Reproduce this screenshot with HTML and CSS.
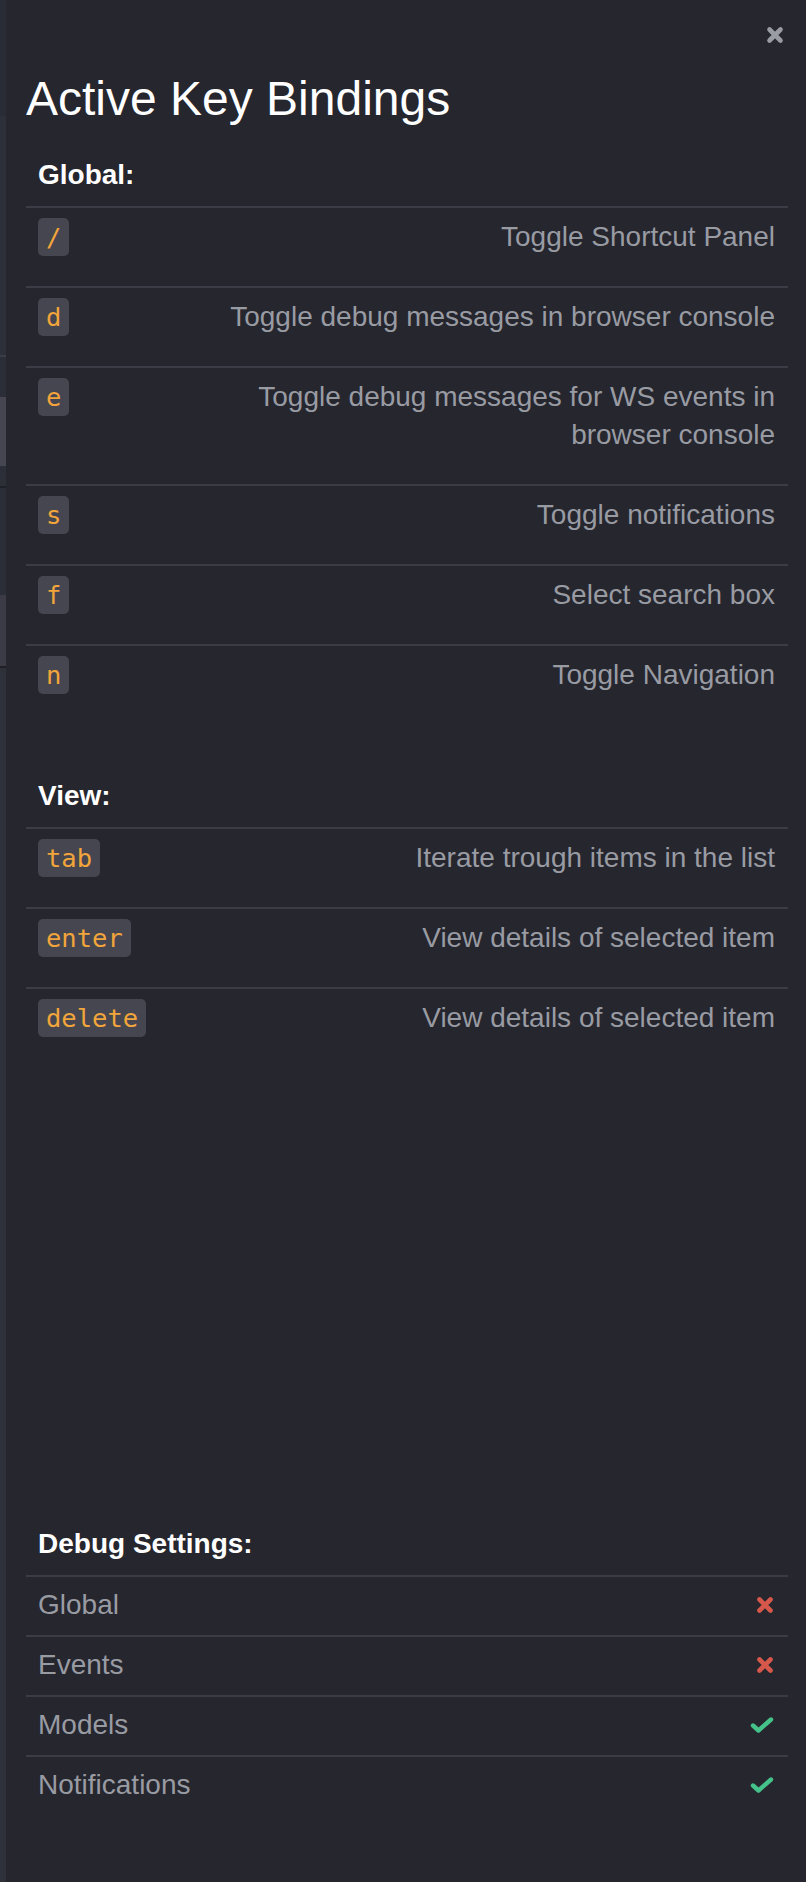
FILE: index.html
```html
<!DOCTYPE html>
<html lang="en">
<head>
<meta charset="utf-8">
<title>Active Key Bindings</title>
<link rel="stylesheet" href="styles.css">
</head>
<body>
<div class="page">
  <aside class="edge" aria-hidden="true">
    <div class="seg seg-a"></div>
    <div class="seg seg-b"></div>
    <div class="seg seg-line-light"></div>
    <div class="seg seg-c"></div>
    <div class="seg seg-d"></div>
    <div class="seg seg-e"></div>
    <div class="seg seg-line-dark"></div>
    <div class="seg seg-f"></div>
    <div class="seg seg-g"></div>
    <div class="seg seg-line-dark"></div>
    <div class="seg seg-rest"></div>
  </aside>

  <section class="panel">
    <div class="toolbar">
      <button class="close" type="button" aria-label="Close">
        <svg viewBox="0 0 18 18"><path d="M3.5 3.5L14.5 14.5M14.5 3.5L3.5 14.5"/></svg>
      </button>
    </div>

    <h1 class="title">Active Key Bindings</h1>

    <div class="group group-global">
      <h2 class="group-title">Global:</h2>
      <ul class="list">
        <li class="binding"><kbd class="key">/</kbd><span class="desc">Toggle Shortcut Panel</span></li>
        <li class="binding"><kbd class="key">d</kbd><span class="desc">Toggle debug messages in browser console</span></li>
        <li class="binding"><kbd class="key">e</kbd><span class="desc">Toggle debug messages for WS events in browser console</span></li>
        <li class="binding"><kbd class="key">s</kbd><span class="desc">Toggle notifications</span></li>
        <li class="binding"><kbd class="key">f</kbd><span class="desc">Select search box</span></li>
        <li class="binding"><kbd class="key">n</kbd><span class="desc">Toggle Navigation</span></li>
      </ul>
    </div>

    <div class="group group-view">
      <h2 class="group-title">View:</h2>
      <ul class="list">
        <li class="binding"><kbd class="key">tab</kbd><span class="desc">Iterate trough items in the list</span></li>
        <li class="binding"><kbd class="key">enter</kbd><span class="desc">View details of selected item</span></li>
        <li class="binding"><kbd class="key">delete</kbd><span class="desc">View details of selected item</span></li>
      </ul>
    </div>

    <div class="group group-debug">
      <h2 class="group-title">Debug Settings:</h2>
      <ul class="list">
        <li class="setting"><span class="label">Global</span>
          <svg class="state state-off" viewBox="0 0 18 18"><path d="M3.5 3.5L14.5 14.5M14.5 3.5L3.5 14.5"/></svg></li>
        <li class="setting"><span class="label">Events</span>
          <svg class="state state-off" viewBox="0 0 18 18"><path d="M3.5 3.5L14.5 14.5M14.5 3.5L3.5 14.5"/></svg></li>
        <li class="setting"><span class="label">Models</span>
          <svg class="state state-on" viewBox="0 0 24 16"><path d="M3 8.5L8.5 13.5L21 2.5"/></svg></li>
        <li class="setting"><span class="label">Notifications</span>
          <svg class="state state-on" viewBox="0 0 24 16"><path d="M3 8.5L8.5 13.5L21 2.5"/></svg></li>
      </ul>
    </div>
  </section>
</div>
</body>
</html>
```

FILE: styles.css
```css
* { box-sizing: border-box; }

html, body {
  margin: 0;
  padding: 0;
}

body {
  background: #25262e;
  color: #999ba3;
  font-family: "Liberation Sans", Arial, Helvetica, sans-serif;
}

.page {
  display: flex;
  min-height: 1882px;
}

/* strip of the underlying page visible at the left edge */
.edge {
  width: 6px;
  flex: none;
  display: flex;
  flex-direction: column;
}
.seg-a { height: 116px; background: #2a2c35; }
.seg-b { height: 239px; background: #2e3039; }
.seg-line-light { height: 2px; background: #3b3d46; }
.seg-c { height: 40px; background: #2c2e37; }
.seg-d { height: 69px; background: #45464f; }
.seg-e { height: 20px; background: #2d2f38; }
.seg-line-dark { height: 2px; background: #1f2027; }
.seg-f { height: 107px; background: #2c2e37; }
.seg-g { height: 71px; background: #3a3b45; }
.seg-rest { flex: 1; background: #2e313a; }

.panel {
  flex: 1;
  display: flex;
  flex-direction: column;
  padding: 26px 18px 67px 20px;
}

.toolbar {
  display: flex;
  justify-content: flex-end;
  padding-right: 4px;
}

.close {
  display: block;
  width: 18px;
  height: 18px;
  padding: 0;
  border: 0;
  background: none;
}
.close svg {
  display: block;
  width: 18px;
  height: 18px;
  fill: none;
  stroke: #9a9ca4;
  stroke-width: 4.6;
  stroke-linecap: round;
}

.title {
  margin: 28px 0 0;
  font-size: 48px;
  line-height: 54px;
  font-weight: normal;
  color: #ffffff;
}

.group-title {
  margin: 0;
  padding: 0 12px 12px;
  font-size: 28px;
  line-height: 38px;
  font-weight: bold;
  color: #ffffff;
}

.group-global { margin-top: 30px; }
.group-view { margin-top: 53px; }
.group-debug { margin-top: auto; }

.list {
  list-style: none;
  margin: 0;
  padding: 0;
}

.binding {
  display: flex;
  justify-content: space-between;
  align-items: flex-start;
  gap: 24px;
  border-top: 2px solid #3b3c45;
  padding: 10px 13px 30px 12px;
  font-size: 28px;
  line-height: 38px;
}

.key {
  flex: none;
  height: 38px;
  padding: 0 8px;
  border-radius: 5px;
  background: #45464f;
  color: #f2a53b;
  font-family: "DejaVu Sans Mono", "Liberation Mono", monospace;
  font-size: 25.5px;
  line-height: 38px;
}

.desc {
  max-width: 560px;
  text-align: right;
  color: #999ba3;
}

.setting {
  display: flex;
  justify-content: space-between;
  align-items: center;
  border-top: 2px solid #3b3c45;
  padding: 9px 14px 11.5px 12px;
  font-size: 28px;
  line-height: 37.5px;
}

.label { color: #999ba3; }

.state {
  display: block;
  fill: none;
  stroke-linecap: round;
  stroke-linejoin: round;
}
.state-off {
  width: 18px;
  height: 18px;
  stroke: #d6584b;
  stroke-width: 4.6;
}
.state-on {
  width: 24px;
  height: 16px;
  stroke: #45c28a;
  stroke-width: 4.4;
}
```
